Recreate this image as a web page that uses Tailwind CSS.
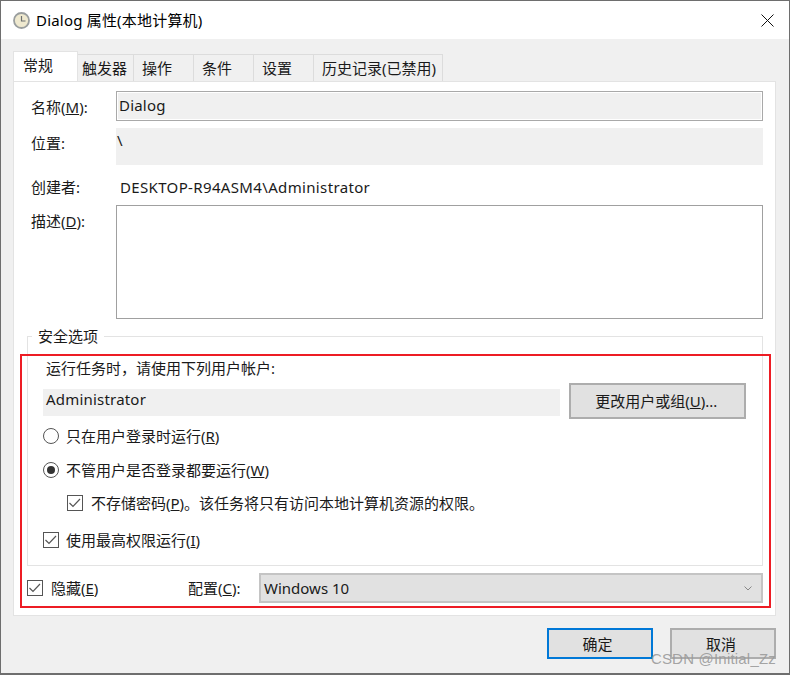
<!DOCTYPE html>
<html lang="zh-CN">
<head>
  <meta charset="UTF-8" />
  <title>Dialog 属性(本地计算机)</title>
  <script src="https://cdn.jsdelivr.net/npm/@tailwindcss/browser@4"></script>
</head>
<body class="bg-[#f0f0f0] w-[790px] h-[675px] overflow-hidden">
  <div class="relative w-[790px] h-[675px] flex flex-col border border-[#6e6e6e] border-b-2 bg-[#f0f0f0] text-[#1a1a1a] text-[15px] leading-5 font-['Noto_Sans','Noto_Sans_CJK_SC',sans-serif]">

    <!-- title bar -->
    <div class="h-[38px] shrink-0 bg-white flex items-center pl-[12px] pr-[15px]">
      <svg width="17" height="17" viewBox="0 0 17 17">
        <circle cx="8.5" cy="8.5" r="7.5" fill="#efe9cf" stroke="#9a9e9e" stroke-width="1.8" />
        <path d="M8.5 4v5h4" fill="none" stroke="#6d7070" stroke-width="1.2" />
      </svg>
      <span class="ml-[6px] text-[15px] tracking-[0.2px] text-black">Dialog 属性(本地计算机)</span>
      <svg class="ml-auto" width="13" height="13" viewBox="0 0 13 13">
        <path d="M.5.5l12 12M12.5.5l-12 12" stroke="#111" stroke-width="1" fill="none" />
      </svg>
    </div>

    <!-- tabs -->
    <div class="flex items-end h-[42px] pl-[12px] shrink-0">
      <div class="w-[65px] h-[30px] bg-white border border-b-0 border-[#e3e3e3] pl-[9px] pt-[3px] relative z-10">常规</div>
      <div class="w-[56px] h-[27px] border-t border-r border-[#dcdcdc] pl-[4px] pt-[3px]">触发器</div>
      <div class="w-[60px] h-[27px] border-t border-r border-[#dcdcdc] pl-[8px] pt-[3px]">操作</div>
      <div class="w-[60px] h-[27px] border-t border-r border-[#dcdcdc] pl-[8px] pt-[3px]">条件</div>
      <div class="w-[60px] h-[27px] border-t border-r border-[#dcdcdc] pl-[8px] pt-[3px]">设置</div>
      <div class="w-[129px] h-[27px] border-t border-r border-[#dcdcdc] pl-[8px] pt-[3px]">历史记录(已禁用)</div>
    </div>

    <!-- panel -->
    <div class="ml-[12px] w-[763px] h-[535px] bg-white border border-[#e3e3e3] pl-[13px] pr-[12px] pt-[9px] shrink-0">
      <div class="flex h-[30px]">
        <div class="w-[89px] pl-[4px] pt-[6px]">名称(<u>M</u>):</div>
        <div class="w-[647px] h-[30px] border-2 border-[#a9a9a9] outline outline-1 -outline-offset-2 outline-white bg-[#f0f0f0] pt-[2px] tracking-[0.2px]"><span class="ml-[1px]">Dialog</span></div>
      </div>
      <div class="flex h-[37px] mt-[7px]">
        <div class="w-[89px] pl-[4px] pt-[5px]">位置:</div>
        <div class="w-[647px] bg-[#f0f0f0] pl-[1px] pt-[2px]">\</div>
      </div>
      <div class="flex h-[40px] items-center pt-[4px]">
        <div class="w-[93px] pl-[4px]">创建者:</div>
        <div class="tracking-[0.35px]">DESKTOP-R94ASM4\Administrator</div>
      </div>
      <div class="flex h-[114px]">
        <div class="w-[89px] pl-[4px] pt-[6px]">描述(<u>D</u>):</div>
        <div class="w-[647px] bg-white border border-[#a0a0a0]"></div>
      </div>

      <!-- security options -->
      <div class="relative mt-[17px] w-[736px] h-[230px] border border-[#e3e3e3] pl-[18px] pr-[16px] pt-[21px]">
        <div class="absolute left-[4px] -top-[11px] bg-white px-[6px] leading-5">安全选项</div>
        <div>运行任务时，请使用下列用户帐户:</div>
        <div class="flex mt-[5px] -ml-[3px] h-[36px]">
          <div class="w-[518px] h-[27px] mt-[6px] bg-[#f0f0f0] pl-[3px] tracking-[0.2px]">Administrator</div>
          <div class="ml-[9px] w-[178px] h-[36px] bg-[#e1e1e1] border-2 border-[#adadad] flex items-center justify-center pr-[2px]">更改用户或组(<u>U</u>)...</div>
        </div>
        <div class="flex items-center mt-[7px] -ml-[3px] h-[20px]">
          <span class="w-[16px] h-[16px] rounded-full border border-[#555] bg-white"></span>
          <span class="ml-[7px]">只在用户登录时运行(<u>R</u>)</span>
        </div>
        <div class="flex items-center mt-[14px] -ml-[3px] h-[20px]">
          <span class="w-[16px] h-[16px] rounded-full border border-[#555] bg-white flex items-center justify-center"><span class="w-[8px] h-[8px] rounded-full bg-[#333]"></span></span>
          <span class="ml-[7px]">不管用户是否登录都要运行(<u>W</u>)</span>
        </div>
        <div class="flex items-center mt-[13px] ml-[21px] h-[20px]">
          <svg width="16" height="16" viewBox="0 0 16 16"><rect x=".5" y=".5" width="15" height="15" fill="#fff" stroke="#555" /><path d="M2.5 8l3.5 3.5 7-7.5" fill="none" stroke="#555" stroke-width="1.2" /></svg>
          <span class="ml-[8px]">不存储密码(<u>P</u>)。该任务将只有访问本地计算机资源的权限。</span>
        </div>
        <div class="flex items-center mt-[17px] -ml-[3px] h-[20px]">
          <svg width="16" height="16" viewBox="0 0 16 16"><rect x=".5" y=".5" width="15" height="15" fill="#fff" stroke="#555" /><path d="M2.5 8l3.5 3.5 7-7.5" fill="none" stroke="#555" stroke-width="1.2" /></svg>
          <span class="ml-[7px]">使用最高权限运行(<u>I</u>)</span>
        </div>
      </div>

      <!-- hidden / configure -->
      <div class="flex items-center mt-[7px] h-[30px]">
        <svg width="16" height="16" viewBox="0 0 16 16"><rect x=".5" y=".5" width="15" height="15" fill="#fff" stroke="#555" /><path d="M2.5 8l3.5 3.5 7-7.5" fill="none" stroke="#555" stroke-width="1.2" /></svg>
        <span class="ml-[8px] w-[137px]">隐藏(<u>E</u>)</span>
        <span class="w-[71px]">配置(<u>C</u>):</span>
        <div class="w-[504px] h-[30px] bg-[#e1e1e1] border-2 border-[#c4c4c4] flex items-center pl-[3px] pr-[9px]">
          Windows 10
          <svg class="ml-auto" width="8" height="5" viewBox="0 0 8 5"><path d="M.5.5l3.5 3.5 3.5-3.5" fill="none" stroke="#888" /></svg>
        </div>
      </div>
    </div>

    <!-- buttons -->
    <div class="flex justify-end mt-[12px] pr-[13px] gap-[17px]">
      <div class="w-[106px] h-[31px] bg-[#e1e1e1] border-2 border-[#0078d7] flex items-center justify-center pr-[5px]">确定</div>
      <div class="w-[106px] h-[31px] bg-[#e1e1e1] border-2 border-[#adadad] flex items-center justify-center pr-[4px]">取消</div>
    </div>

    <!-- red annotation box drawn over the screenshot -->
    <div class="absolute left-[19px] top-[353px] w-[751px] h-[254px] border-2 border-[#ed1c24] pointer-events-none"></div>
    <!-- watermark -->
    <div class="absolute right-[13px] top-[648px] text-[15px] leading-5 text-[#9a9a9a]/90 tracking-[0.2px] font-['Liberation_Sans',sans-serif]">CSDN @Initial_Zz</div>
  </div>
</body>
</html>
